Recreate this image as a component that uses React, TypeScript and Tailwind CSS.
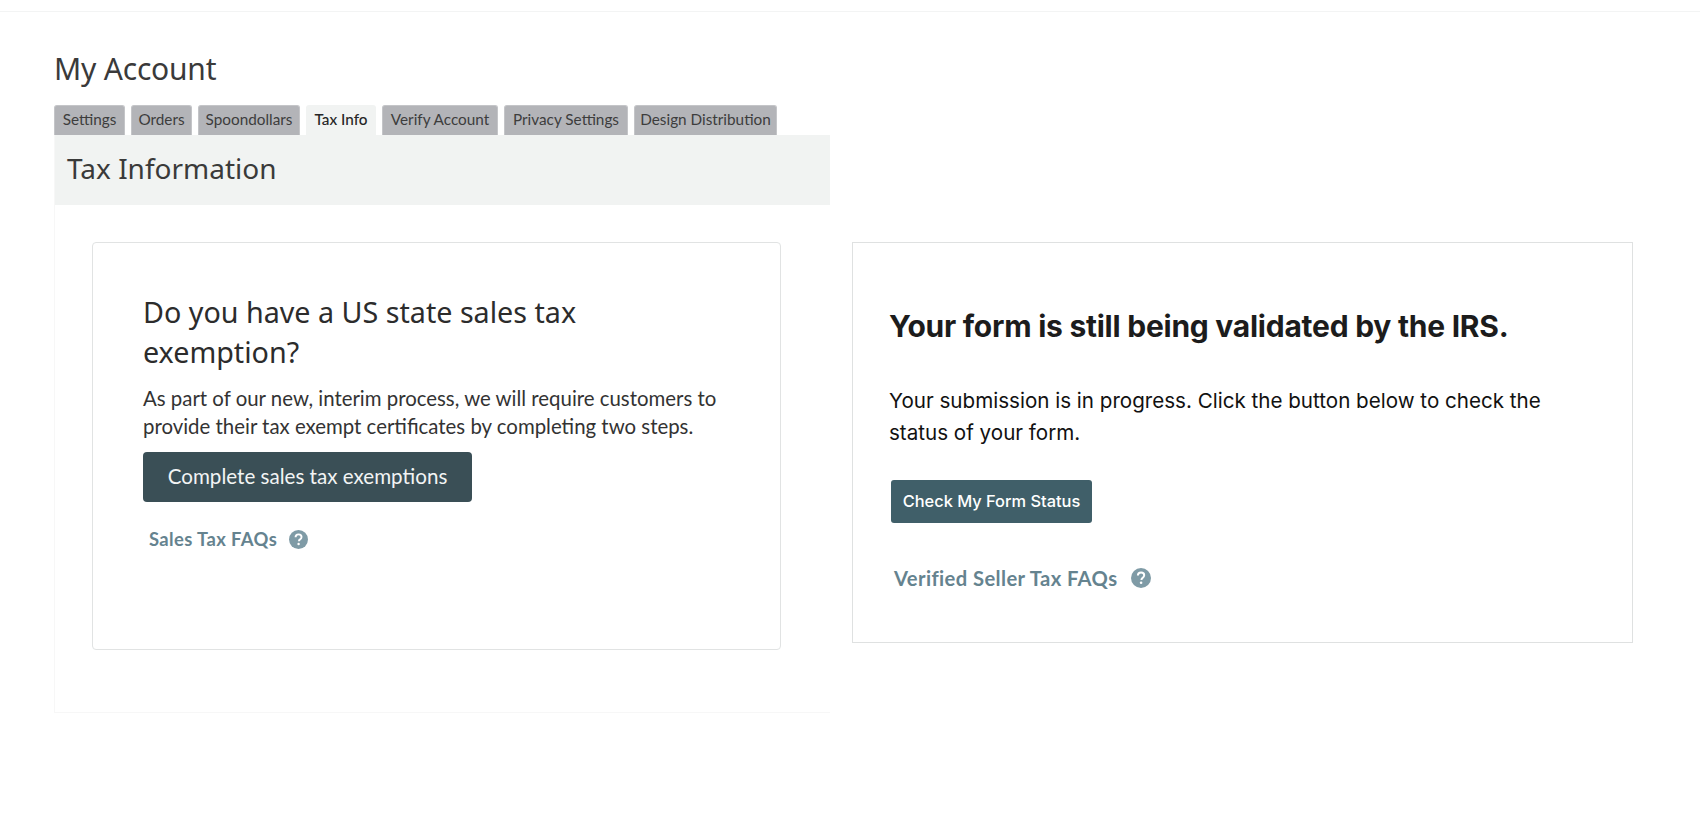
import React from 'react';

const tabs = [
  { label: 'Settings', width: 'w-[71px]' },
  { label: 'Orders', width: 'w-[61px]' },
  { label: 'Spoondollars', width: 'w-[102px]' },
  { label: 'Tax Info', width: 'w-[70px]' },
  { label: 'Verify Account', width: 'w-[116px]' },
  { label: 'Privacy Settings', width: 'w-[124px]' },
  { label: 'Design Distribution', width: 'w-[143px]' },
];

// filled circle with a question mark, same as the site's help icon
const HelpIcon = ({ size }: { size: number }) => (
  <svg width={size} height={size} viewBox="0 0 20 20" className="shrink-0">
    <circle cx="10" cy="10" r="10" fill="#7f9ba6" />
    <path d="M6.9 7.6c0-1.8 1.3-3 3.2-3 1.8 0 3.1 1.1 3.1 2.7 0 1.2-.6 1.9-1.6 2.6-.8.5-1.1.9-1.1 1.7v.3" fill="none" stroke="#fff" strokeWidth="2" />
    <circle cx="10.1" cy="14.8" r="1.3" fill="#fff" />
  </svg>
);

const App = () => {
  return (
    <div className="min-h-[824px] bg-white font-['Lato',sans-serif]">
      <div className="h-3 border-b border-[#f3f4f4]" />

      <div className="flex items-start pl-[54px]">
        <div className="w-[776px]">
          <h1 className="mt-[38px] h-[55px] text-[30px] leading-[38px] tracking-[-0.2px] text-[#3a3a3a] font-['Noto_Sans',sans-serif]">My Account</h1>

          <div className="flex gap-[6px] h-[30px]">
            {tabs.map((t) => (
              <div
                key={t.label}
                className={
                  t.label === 'Tax Info'
                    ? `${t.width} flex items-center justify-center pb-[2px] rounded-t-[3px] bg-[#f1f3f2] text-[15.3px] font-medium text-[#262626]`
                    : `${t.width} flex items-center justify-center pb-[2px] rounded-t-[3px] bg-[#b3b4b8] border-t border-x border-[#c4c5c8] text-[15.3px] text-[#3d3d3d]`
                }
              >
                {t.label}
              </div>
            ))}
          </div>

          <div className="border-l border-b border-[#f7f7f7] h-[578px]">
            <div className="h-[70px] flex items-center px-[12px] pb-[4px] bg-[#f1f3f2]">
              <h2 className="text-[28px] text-[#3a3a3a] font-['Noto_Sans',sans-serif]">Tax Information</h2>
            </div>

            <div className="mt-[37px] ml-[37px] w-[689px] h-[408px] border border-[#e1e3e3] rounded-[4px] pt-[49px] px-[50px]">
              <h3 className="text-[28.7px] leading-[40px] text-[#2c2c2c] font-['Noto_Sans',sans-serif]">Do you have a US state sales tax exemption?</h3>
              <p className="mt-[12px] text-[20.4px] leading-[28px] text-[#333333]">
                As part of our new, interim process, we will require customers to provide their tax exempt certificates by completing two steps.
              </p>
              <div className="mt-[12px] w-[329px] h-[50px] pb-[1px] flex items-center justify-center rounded-[4px] bg-[#3a4f56] text-[20.6px] text-[#f2f4f4]">
                Complete sales tax exemptions
              </div>
              <div className="mt-[24px] ml-[6px] flex items-center gap-[12px]">
                <span className="text-[18.4px] font-bold tracking-[0.4px] text-[#65838f]">Sales Tax FAQs</span>
                <HelpIcon size={19} />
              </div>
            </div>
          </div>
        </div>

        <div className="mt-[230px] ml-[22px] w-[781px] h-[401px] border border-[#dfe1e1] pt-[63px] pl-[36px] pr-[37px] font-['Inter',sans-serif]">
          <h3 className="text-[30px] leading-[40px] font-bold tracking-[-0.25px] text-[#1c1c1c]">Your form is still being validated by the IRS.</h3>
          <p className="mt-[39px] text-[20.6px] leading-[32px] text-[#111111]">
            Your submission is in progress. Click the button below to check the status of your form.
          </p>
          <div className="mt-[31px] ml-[2px] w-[201px] h-[43px] flex items-center justify-center rounded-[3px] bg-[#405f69] text-[16.4px] font-medium text-white">
            Check My Form Status
          </div>
          <div className="mt-[40px] ml-[5px] flex items-center gap-[14px]">
            <span className="text-[20.2px] font-bold tracking-[0.4px] text-[#65838f] font-['Lato',sans-serif]">Verified Seller Tax FAQs</span>
            <HelpIcon size={20} />
          </div>
        </div>
      </div>
    </div>
  );
};

export default App;
